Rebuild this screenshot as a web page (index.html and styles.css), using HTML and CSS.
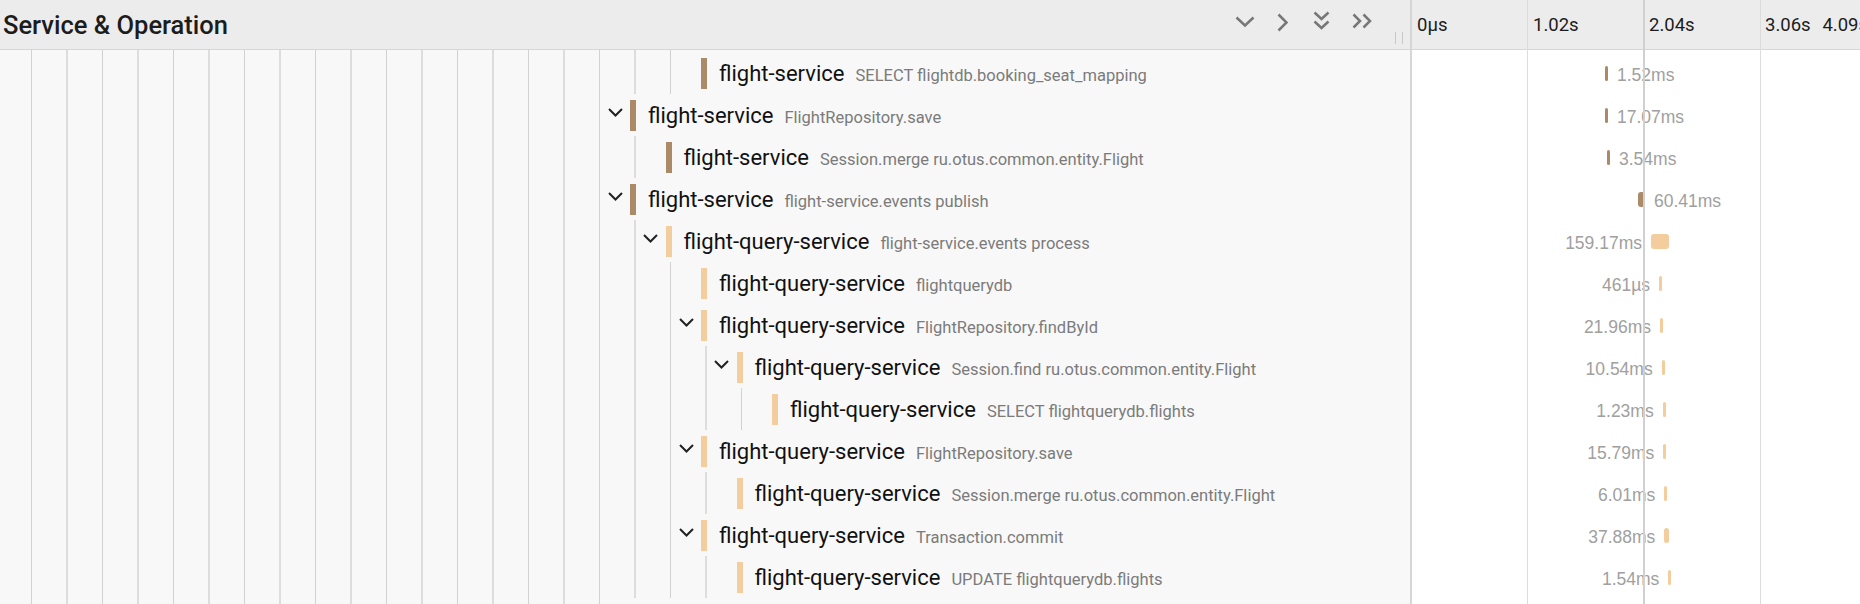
FILE: index.html
```html
<!DOCTYPE html>
<html lang="en">
<head>
<meta charset="utf-8">
<title>Trace</title>
<link rel="stylesheet" href="styles.css">
</head>
<body>
<div class="trace">
  <div class="header">
    <div class="hdr-name">
      <span class="title">Service &amp; Operation</span>
      <div class="hdr-tools">
        <svg class="tool" viewBox="0 0 38 49"><polyline points="10.5,17.5 19,25.5 27.5,17.5"/></svg>
        <svg class="tool" viewBox="0 0 38 49"><polyline points="14.5,14.5 22.5,22.5 14.5,30.5"/></svg>
        <svg class="tool" viewBox="0 0 38 49"><polyline points="12.5,12.5 19.5,19 26.5,12.5"/><polyline points="12.5,21.5 19.5,28 26.5,21.5"/></svg>
        <svg class="tool" viewBox="0 0 38 49"><polyline points="13.5,14.5 20,21 13.5,27.5"/><polyline points="23.5,14.5 30,21 23.5,27.5"/></svg>
      </div>
      <span class="resizer"></span>
    </div>
    <div class="hdr-timeline">
      <span class="tick-label">0µs</span>
      <span class="tick-label">1.02s</span>
      <span class="tick-label">2.04s</span>
      <span class="tick-label last"><span>3.06s</span><span>4.09s</span></span>
    </div>
  </div>

  <div class="rows">
    <div class="row row-first">
      <div class="name-cell">
        <span class="indent d2"></span>
        <span class="bar fs"></span>
        <span class="label"><span class="svc">flight-service</span><span class="op">SELECT flightdb.booking_seat_mapping</span></span>
      </div>
      <div class="tl-cell"><span class="span-bar fs" style="left:193px;width:3px"><span class="dur r">1.52ms</span></span></div>
    </div>

    <div class="row">
      <div class="name-cell">
        <span class="indent d0"><svg class="chev" viewBox="0 0 15 9"><polyline points="1,1 7.5,7.5 14,1"/></svg></span>
        <span class="bar fs"></span>
        <span class="label"><span class="svc">flight-service</span><span class="op">FlightRepository.save</span></span>
      </div>
      <div class="tl-cell"><span class="span-bar fs" style="left:193px;width:3px"><span class="dur r">17.07ms</span></span></div>
    </div>

    <div class="row">
      <div class="name-cell">
        <span class="indent d1"></span>
        <span class="bar fs"></span>
        <span class="label"><span class="svc">flight-service</span><span class="op">Session.merge ru.otus.common.entity.Flight</span></span>
      </div>
      <div class="tl-cell"><span class="span-bar fs" style="left:195px;width:3px"><span class="dur r">3.54ms</span></span></div>
    </div>

    <div class="row">
      <div class="name-cell">
        <span class="indent d0"><svg class="chev" viewBox="0 0 15 9"><polyline points="1,1 7.5,7.5 14,1"/></svg></span>
        <span class="bar fs"></span>
        <span class="label"><span class="svc">flight-service</span><span class="op">flight-service.events publish</span></span>
      </div>
      <div class="tl-cell"><span class="span-bar fs" style="left:226px;width:7px"><span class="dur r">60.41ms</span></span></div>
    </div>

    <div class="row">
      <div class="name-cell">
        <span class="indent d1"><svg class="chev" viewBox="0 0 15 9"><polyline points="1,1 7.5,7.5 14,1"/></svg></span>
        <span class="bar fqs"></span>
        <span class="label"><span class="svc">flight-query-service</span><span class="op">flight-service.events process</span></span>
      </div>
      <div class="tl-cell"><span class="span-bar fqs" style="left:239px;width:17.5px"><span class="dur l">159.17ms</span></span></div>
    </div>

    <div class="row">
      <div class="name-cell">
        <span class="indent d2"></span>
        <span class="bar fqs"></span>
        <span class="label"><span class="svc">flight-query-service</span><span class="op">flightquerydb</span></span>
      </div>
      <div class="tl-cell"><span class="span-bar fqs" style="left:247px;width:3px"><span class="dur l">461µs</span></span></div>
    </div>

    <div class="row">
      <div class="name-cell">
        <span class="indent d2"><svg class="chev" viewBox="0 0 15 9"><polyline points="1,1 7.5,7.5 14,1"/></svg></span>
        <span class="bar fqs"></span>
        <span class="label"><span class="svc">flight-query-service</span><span class="op">FlightRepository.findById</span></span>
      </div>
      <div class="tl-cell"><span class="span-bar fqs" style="left:248px;width:3px"><span class="dur l">21.96ms</span></span></div>
    </div>

    <div class="row">
      <div class="name-cell">
        <span class="indent d3"><svg class="chev" viewBox="0 0 15 9"><polyline points="1,1 7.5,7.5 14,1"/></svg></span>
        <span class="bar fqs"></span>
        <span class="label"><span class="svc">flight-query-service</span><span class="op">Session.find ru.otus.common.entity.Flight</span></span>
      </div>
      <div class="tl-cell"><span class="span-bar fqs" style="left:249.7px;width:3px"><span class="dur l">10.54ms</span></span></div>
    </div>

    <div class="row">
      <div class="name-cell">
        <span class="indent d4"></span>
        <span class="bar fqs"></span>
        <span class="label"><span class="svc">flight-query-service</span><span class="op">SELECT flightquerydb.flights</span></span>
      </div>
      <div class="tl-cell"><span class="span-bar fqs" style="left:250.7px;width:3px"><span class="dur l">1.23ms</span></span></div>
    </div>

    <div class="row">
      <div class="name-cell">
        <span class="indent d2"><svg class="chev" viewBox="0 0 15 9"><polyline points="1,1 7.5,7.5 14,1"/></svg></span>
        <span class="bar fqs"></span>
        <span class="label"><span class="svc">flight-query-service</span><span class="op">FlightRepository.save</span></span>
      </div>
      <div class="tl-cell"><span class="span-bar fqs" style="left:251.3px;width:3px"><span class="dur l">15.79ms</span></span></div>
    </div>

    <div class="row">
      <div class="name-cell">
        <span class="indent d3"></span>
        <span class="bar fqs"></span>
        <span class="label"><span class="svc">flight-query-service</span><span class="op">Session.merge ru.otus.common.entity.Flight</span></span>
      </div>
      <div class="tl-cell"><span class="span-bar fqs" style="left:252.3px;width:3px"><span class="dur l">6.01ms</span></span></div>
    </div>

    <div class="row">
      <div class="name-cell">
        <span class="indent d2"><svg class="chev" viewBox="0 0 15 9"><polyline points="1,1 7.5,7.5 14,1"/></svg></span>
        <span class="bar fqs"></span>
        <span class="label"><span class="svc">flight-query-service</span><span class="op">Transaction.commit</span></span>
      </div>
      <div class="tl-cell"><span class="span-bar fqs" style="left:252.3px;width:4.4px"><span class="dur l">37.88ms</span></span></div>
    </div>

    <div class="row">
      <div class="name-cell">
        <span class="indent d3"></span>
        <span class="bar fqs"></span>
        <span class="label"><span class="svc">flight-query-service</span><span class="op">UPDATE flightquerydb.flights</span></span>
      </div>
      <div class="tl-cell"><span class="span-bar fqs" style="left:256.3px;width:3px"><span class="dur l">1.54ms</span></span></div>
    </div>

    <div class="row row-last">
      <div class="name-cell">
        <span class="indent d0"></span>
      </div>
      <div class="tl-cell"></div>
    </div>
  </div>

  <span class="tick t1"></span>
  <span class="tick t2"></span>
  <span class="tick t3"></span>
</div>
</body>
</html>
```

FILE: styles.css
```css
* { box-sizing: border-box; }

html, body {
  margin: 0;
  padding: 0;
  width: 1860px;
  height: 604px;
  overflow: hidden;
  background: #ffffff;
}

body {
  font-family: Roboto, "Liberation Sans", sans-serif;
  color: #111111;
}

.trace {
  position: relative;
  width: 1876px;
  height: 604px;
  overflow: hidden;
}

/* ---------- header ---------- */
.header {
  display: flex;
  height: 50px;
  background: #ececec;
  border-bottom: 1px solid #d6d6d6;
}

.hdr-name {
  width: 1410px;
  flex: none;
  display: flex;
  align-items: center;
  padding-left: 3px;
  padding-right: 7px;
}

.title {
  flex: 1;
  font-size: 25.5px;
  font-weight: 500;
  color: #1c1c1c;
  white-space: nowrap;
}

.hdr-tools {
  display: flex;
  align-self: stretch;
}

.tool {
  width: 38px;
  height: 49px;
  display: block;
  fill: none;
  stroke: #777777;
  stroke-width: 2.5;
}

.resizer {
  align-self: flex-start;
  margin-top: 31.5px;
  margin-left: 17.5px;
  width: 8px;
  height: 12px;
  border-left: 1px solid #c8c8c8;
  border-right: 1px solid #c8c8c8;
}

.hdr-timeline {
  width: 466px;
  flex: none;
  border-left: 2px solid #d6d6d6;
  display: grid;
  grid-template-columns: repeat(4, 116px);
  align-items: center;
}

.tick-label {
  padding-left: 5px;
  font-size: 18.5px;
  color: #1c1c1c;
  white-space: nowrap;
}

.tick-label.last {
  display: flex;
  justify-content: space-between;
  padding-right: 8px;
}

/* ---------- rows ---------- */
.rows {
  height: 554px;
  overflow: hidden;
}

.row {
  display: flex;
  height: 42px;
}

.row-first {
  height: 44px;
}

.row-last {
  height: 6px;
}

.name-cell {
  width: 1410px;
  flex: none;
  display: flex;
  align-items: center;
  padding-left: 31px;
  background: #f8f8f8;
  overflow: hidden;
}

.row-first .name-cell {
  padding-top: 2px;
}

.indent {
  align-self: stretch;
  flex: none;
  display: flex;
  align-items: center;
  justify-content: flex-end;
  background-image: linear-gradient(to right,
    #d2d2d2 0, #d2d2d2 1px,
    transparent 1px, transparent 35px,
    #dddddd 35px, #dddddd 37px,
    transparent 37px);
  background-size: 71px 100%;
  background-repeat: repeat-x;
}

.row-first .indent {
  margin-top: -2px;
}

.d0 { width: 599px; }
.d1 { width: 634.5px; }
.d2 { width: 670px; }
.d3 { width: 705.5px; }
.d4 { width: 741px; }

.chev {
  width: 15px;
  height: 9px;
  margin-right: 7.5px;
  margin-top: -6px;
  fill: none;
  stroke: #222222;
  stroke-width: 2;
}

.bar {
  flex: none;
  width: 6px;
  height: 31px;
}

.fs { background: #ab8a67; }
.fqs { background: #f3cd9d; }

.label {
  margin-left: 12px;
  white-space: nowrap;
}

.svc {
  font-size: 22px;
  color: #111111;
}

.op {
  margin-left: 11px;
  font-size: 16.5px;
  color: #7b7b7b;
}

/* ---------- timeline ---------- */
.tl-cell {
  position: relative;
  width: 466px;
  flex: none;
  border-left: 2px solid #d6d6d6;
  background: #ffffff;
}

.span-bar {
  position: absolute;
  top: 14px;
  height: 15px;
  border-radius: 3px;
}

.row-first .span-bar {
  top: 16px;
}

.dur {
  position: absolute;
  top: 50%;
  transform: translateY(-50%);
  margin-top: 1.5px;
  font-family: "Liberation Sans", Arial, sans-serif;
  font-size: 17.5px;
  color: #a0a0a0;
  white-space: nowrap;
}

.dur.r { left: calc(100% + 9px); }
.dur.l { right: calc(100% + 9px); }

.tick {
  position: absolute;
  top: 0;
  bottom: 0;
  width: 1px;
  background: #dcdcdc;
}

.t1 { left: 1527px; }
.t2 { left: 1643px; width: 2px; background: #d0d0d0; }
.t3 { left: 1760px; }
```
